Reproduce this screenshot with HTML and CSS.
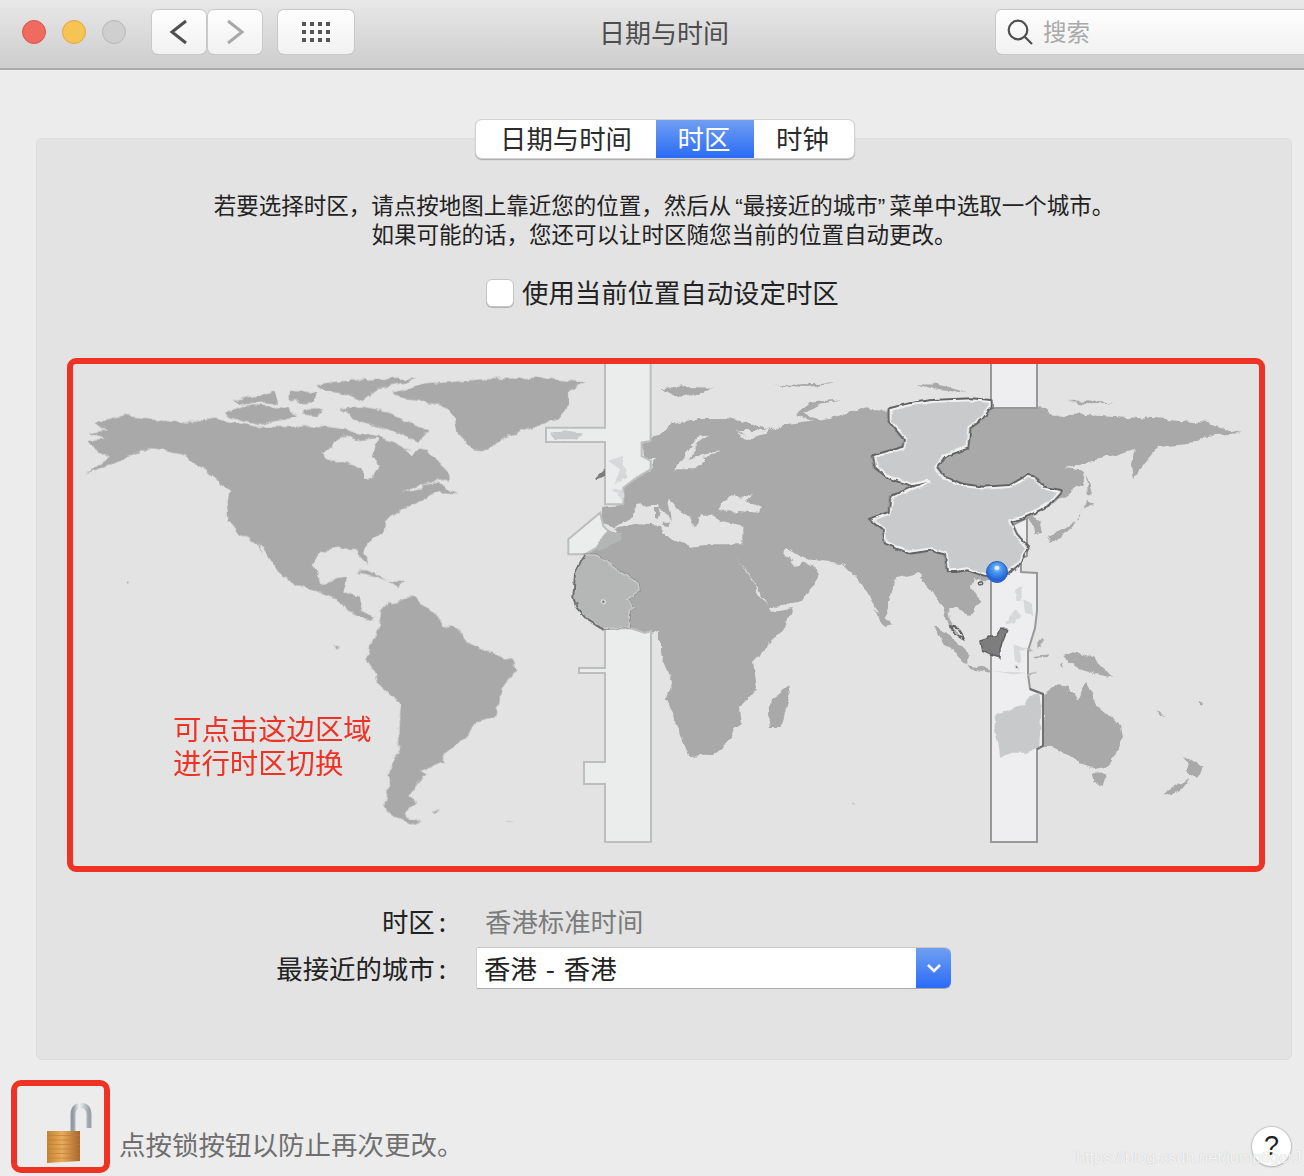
FILE: index.html
```html
<!DOCTYPE html>
<html lang="zh-CN">
<head>
<meta charset="utf-8">
<title>日期与时间</title>
<link rel="stylesheet" href="styles.css">
</head>
<body>
<header class="titlebar">
  <div class="lights">
    <span class="light light-red"></span>
    <span class="light light-yellow"></span>
    <span class="light light-grey"></span>
  </div>
  <div class="nav">
    <button class="tool tool-nav">
      <svg width="20" height="30" viewBox="0 0 20 30"><path class="chev" d="M17 4 3 15l14 11"/></svg>
    </button>
    <button class="tool tool-nav">
      <svg width="20" height="30" viewBox="0 0 20 30"><path class="chev chev-off" d="M3 4l14 11L3 26"/></svg>
    </button>
  </div>
  <button class="tool tool-grid">
    <svg width="30" height="22" viewBox="0 0 30 22"><path class="dots" d="M1 1h4v4H1zM9 1h4v4H9zM17 1h4v4h-4zM25 1h4v4h-4zM1 9h4v4H1zM9 9h4v4H9zM17 9h4v4h-4zM25 9h4v4h-4zM1 17h4v4H1zM9 17h4v4H9zM17 17h4v4h-4zM25 17h4v4h-4z"/></svg>
  </button>
  <h1 class="title">日期与时间</h1>
  <div class="search">
    <svg width="26" height="26" viewBox="0 0 26 26"><circle class="lens" cx="11" cy="11" r="9.3"/><path class="lens" d="M17.500 17.500 25 25"/></svg>
    <span class="search-text">搜索</span>
  </div>
</header>

<main class="page">
  <section class="panel">
    <div class="tabs">
      <span class="tab tab-a">日期与时间</span>
      <span class="tab tab-b">时区</span>
      <span class="tab tab-c">时钟</span>
    </div>
    <p class="desc">若要选择时区，请点按地图上靠近您的位置，然后从<span class="q q-open">“</span>最接近的城市<span class="q q-close">”</span>菜单中选取一个城市。<br>如果可能的话，您还可以让时区随您当前的位置自动更改。</p>
    <label class="auto"><span class="box"></span><span class="auto-text">使用当前位置自动设定时区</span></label>

    <div class="frame">
      <svg class="map" width="1186" height="502" viewBox="73 363 1186 502">
        <defs>
          <filter id="rough" filterUnits="userSpaceOnUse" x="73" y="363" width="1186" height="502" color-interpolation-filters="sRGB">
            <feTurbulence type="fractalNoise" baseFrequency=".09" numOctaves="3" seed="4" result="n"/>
            <feDisplacementMap in="SourceGraphic" in2="n" scale="7" xChannelSelector="R" yChannelSelector="G"/>
            <feGaussianBlur stdDeviation=".4"/>
          </filter>
          <filter id="rough-s" filterUnits="userSpaceOnUse" x="73" y="363" width="1186" height="502" color-interpolation-filters="sRGB">
            <feTurbulence type="fractalNoise" baseFrequency=".12" numOctaves="2" seed="9" result="n"/>
            <feDisplacementMap in="SourceGraphic" in2="n" scale="4" xChannelSelector="R" yChannelSelector="G"/>
            <feGaussianBlur stdDeviation=".35"/>
          </filter>
          <radialGradient id="pin" cx=".5" cy=".32" r=".72">
            <stop offset="0" stop-color="#a9d6ff"/>
            <stop offset=".3" stop-color="#4c9af0"/>
            <stop offset=".8" stop-color="#1f5fd8"/>
            <stop offset="1" stop-color="#3f7edc"/>
          </radialGradient>
          <path id="zone" class="ns" d="M590,175 L640,160 700,150 800,145 850,150 850,168 825,205 795,230 790,290 730,315 710,350 730,380 780,402 830,410 900,405 945,375 965,380 985,410 1030,420 1000,460 950,490 930,500 900,510 915,550 945,590 920,640 895,665 850,675 830,670 790,655 760,660 740,660 735,610 700,595 640,605 580,575 575,535 540,505 590,485 595,440 640,415 690,392 650,402 590,380 555,350 550,315 625,290 630,265 590,210 Z"/>
          <path id="wafrica" class="ns" d="M135,520 L105,580 100,650 110,680 140,715 190,745 270,740 270,690 285,680 262,655 300,630 295,605 240,570 170,520 Z"/>
          <clipPath id="zoneclip"><use href="#zone"/></clipPath>
          <clipPath id="wclip"><use href="#wafrica"/></clipPath>
        </defs>

        <g filter="url(#rough)">
          <!-- Eurasia and Africa, page coordinates -->
          <path class="land" d="M600,505 L623,503 623,487 637,477 650,468 657,458 650,458 643,455 642,443 653,437 673,423 700,417 727,417 747,422 760,427 767,430 740,430 750,438 770,428 787,423 823,418 847,413 858,408 889,410 932,400 991,400 1030,405 1045,408 1053,415 1088,413 1138,417 1208,422 1240,432 1205,435 1197,442 1158,446 1146,460 1133,478 1131,463 1135,448 1103,457 1064,467 1084,470 1082,483 1061,497 1049,505 1030,513 1041,520 1043,532 1035,533 1028,517 1021,530 1012,563 991,580 975,578 972,587 982,602 967,615 957,607 948,607 950,620 962,638 950,627 943,607 933,592 917,572 893,578 888,607 884,620 866,590 853,572 840,563 812,560 783,548 795,566 806,562 820,572 803,600 770,606 772,611 792,608 784,627 753,660 757,687 740,707 742,723 734,727 730,740 714,753 689,755 676,723 666,698 672,682 660,653 660,630 650,633 630,627 603,628 587,618 573,597 582,557 597,547 608,530 622,533 612,527 603,523 603,513 Z"/>
          <!-- Seas cut into the land -->
          <g transform="translate(540 380) scale(.33333)">
            <path class="sea" d="M215,445 L265,415 295,375 350,365 395,420 385,355 415,385 450,405 465,440 485,400 525,405 510,400 545,420 610,435 610,490 510,490 455,497 415,480 365,460 365,435 300,430 Z"/>
            <path class="land" d="M345,375 L360,375 355,415 345,410 Z M370,425 L395,425 385,435 370,432 Z"/>
            <path class="sea" d="M535,385 L565,345 610,350 640,338 615,360 665,380 660,395 590,390 560,395 Z"/>
            <path class="sea" d="M578,505 L600,540 685,670 665,650 630,590 Z"/>
            <path class="sea" d="M735,505 L750,510 768,555 760,558 Z"/>
            <path class="sea" d="M435,215 L475,165 505,160 470,185 470,210 445,235 500,215 550,210 490,225 495,240 460,265 400,265 430,235 Z"/>
            <path class="sea" d="M585,148 L630,170 690,145 680,158 620,175 Z"/>
            <path class="land" d="M365,25 L440,18 520,20 470,40 420,50 Z M430,190 L445,185 465,195 445,210 Z"/>
            <path class="land" d="M765,100 L810,65 900,55 830,75 790,100 850,125 790,112 Z"/>
          </g>
          <!-- Far east islands -->
          <g transform="translate(660 350) scale(.389 .33333)">
            <path class="land" d="M995,560 L1075,505 1090,470 1060,525 1005,580 Z M1095,450 L1120,460 1090,475 Z M1095,365 L1110,430 1100,430 Z"/>
            <path class="land" d="M1045,150 L1100,148 1165,158 1100,160 Z M660,97 L710,98 790,125 720,118 Z M290,103 L450,97 380,108 Z M5,115 L130,110 60,135 Z"/>
          </g>
          <g transform="translate(660 610) scale(.389 .33333)">
            <path class="land" d="M330,225 L335,250 310,345 285,345 280,315 285,265 Z"/>
            <path class="land" d="M550,0 L575,10 595,40 580,45 Z"/>
            <path class="land" d="M985,250 L1020,220 1050,225 1075,270 1095,215 1130,290 1185,345 1190,380 1160,460 1120,475 1080,460 1045,430 1000,405 985,405 Z"/>
            <path class="land" d="M1115,485 L1145,490 1135,525 1120,515 Z M1350,435 L1395,470 1380,500 1360,490 Z M1298,545 L1360,500 1340,530 1315,555 Z"/>
            <path class="land" d="M490,575 L500,580 490,583 Z M1278,295 L1300,315 1280,305 Z M1385,270 L1400,275 1390,280 Z"/>
          </g>
          <g transform="translate(900 540) scale(.33333)">
            <path class="land" d="M105,260 L140,275 205,340 205,370 170,340 130,310 Z"/>
            <path class="land" d="M205,372 L272,388 272,396 215,385 Z"/>
            <path class="land" d="M465,320 L490,345 530,330 580,350 640,410 590,400 540,385 510,365 Z"/>
            <path class="land" d="M415,300 L425,290 425,315 415,320 Z M402,345 L445,340 440,348 405,350 Z M480,370 L488,368 484,380 Z"/>
          </g>
          <!-- North America, Greenland -->
          <g transform="translate(60 350) scale(.3827 .33333)">
            <path class="land" d="M85,215 L165,195 260,205 335,215 410,203 425,208 520,228 600,228 680,225 745,235 770,245 830,255 900,290 960,300 1015,365 1015,385 980,390 945,402 890,425 945,415 950,402 985,395 1040,430 985,425 960,440 930,460 890,480 850,510 845,545 800,585 795,600 808,640 795,635 775,595 725,590 680,600 660,640 680,700 740,675 750,680 740,725 780,740 790,780 820,800 800,805 770,790 720,745 680,725 620,705 590,680 540,630 510,575 470,550 440,505 435,450 450,420 410,390 370,350 320,310 250,295 210,295 160,330 65,370 130,320 90,295 75,270 125,265 75,245 125,238 Z"/>
            <path class="sea" d="M745,250 L770,270 830,260 815,320 835,345 815,385 795,385 790,350 700,325 688,305 Z M900,295 L935,290 920,315 Z"/>
            <path class="sea" d="M515,575 L530,585 565,660 535,625 Z"/>
            <path class="sea" d="M340,315 L385,375 440,410 400,390 Z"/>
            <path class="land" d="M870,125 L950,100 1100,85 1250,80 1375,95 1330,120 1330,160 1300,205 1200,240 1150,265 1120,300 1080,295 1040,250 1030,200 1010,170 950,150 900,145 Z"/>
            <path class="land" d="M670,100 L720,92 800,85 930,82 890,100 830,115 790,150 750,130 690,120 Z M730,175 L790,170 860,185 965,240 935,272 860,235 780,210 Z M430,185 L480,165 590,170 620,195 520,222 440,195 Z M450,148 L560,125 570,155 480,160 Z M600,120 L670,125 660,155 600,150 Z M640,175 L690,175 670,195 635,190 Z"/>
            <path class="land" d="M775,665 L800,655 860,690 820,675 Z M860,695 L905,695 880,710 Z M170,688 L180,690 176,698 Z"/>
          </g>
          <!-- South America -->
          <g transform="translate(60 610) scale(.3827 .33333)">
            <path class="land" d="M840,0 L860,-25 920,-40 960,-15 1000,45 1040,55 1060,90 1120,125 1185,150 1190,180 1160,225 1135,320 1085,335 1070,370 1000,435 1005,450 945,480 960,490 940,510 915,555 930,570 900,600 905,620 945,630 915,640 860,610 850,580 865,470 885,420 890,280 845,235 800,150 805,120 830,60 Z"/>
            <path class="land" d="M970,602 L998,598 985,608 Z M1165,625 L1185,632 1170,630 Z M715,100 L730,110 718,112 Z"/>
          </g>
        </g>

        <!-- Pale time zone bands -->
        <g transform="translate(540 380) scale(.33333)">
          <path class="band ns" d="M195,-60 L332,-60 332,180 305,185 305,225 332,240 332,265 290,290 250,320 250,370 195,370 195,183 18,183 18,140 195,140 Z"/>
          <path class="band ns" d="M180,395 L85,475 85,520 135,520 170,500 205,450 190,435 Z"/>
        </g>
        <path class="band ns" d="M605,628 L630,627 645,632 651,630 651,841 605,841 605,783 584,783 584,761 605,761 605,672 579,672 579,667 605,667 Z"/>
        <path class="band band-on ns" d="M991,355 L1037,355 1037,407 991,407 Z"/>
        <path class="band band-on ns" d="M991,841 L991,578 1000,530 1027,517 1027,555 1021,557 1021,571 1037,572 1037,610 1035,627 1028,650 1028,673 1030,688 1043,693 1043,745 1037,748 1037,841 Z"/>
        <path class="edge-strong ns" d="M1030,688 L1043,693 1043,745 1037,748"/>

        <g filter="url(#rough-s)">
          <g transform="translate(540 380) scale(.33333)">
            <path class="tint-soft" d="M205,240 L245,225 262,290 225,310 240,265 Z M210,322 L250,328 250,365 235,340 Z"/>
            <path class="tint" d="M30,155 L75,148 130,158 105,175 45,175 Z"/>
            <path class="tint-mid" d="M170,490 L205,450 245,460 240,480 175,510 Z"/>
            <path class="dark" d="M165,290 L195,262 195,285 170,295 Z"/>
            <use href="#wafrica" class="wfill"/>
            <g clip-path="url(#wclip)"><use href="#wafrica" class="wfill wglow"/></g>
            <path class="west-line ns" d="M135,520 L105,580 100,650 110,680 140,715 190,745"/>
            <circle class="spot" cx="190" cy="662" r="6"/>
            <circle class="dark" cx="108" cy="668" r="6"/>
          </g>
          <!-- Land inside the selected band -->
          <g transform="translate(660 610) scale(.389 .33333)">
            <path class="tint" d="M950,260 L975,245 980,300 975,405 945,425 905,425 875,440 870,400 860,350 862,315 900,295 935,280 Z"/>
          </g>
          <g transform="translate(900 540) scale(.33333)">
            <path class="tint-soft" d="M345,150 L365,135 365,180 350,180 Z M370,175 L395,190 400,225 375,215 Z M340,310 L385,325 360,330 365,365 345,360 Z M315,250 L345,205 365,225 345,245 Z M275,390 L380,395 340,400 Z"/>
            <circle class="spot" cx="350" cy="378" r="5"/>
            <path class="dark dark-edge ns" d="M240,300 L258,295 270,285 290,285 300,265 320,265 315,285 300,320 300,350 280,345 245,330 Z"/>
            <path class="ring ns" d="M150,255 L175,260 190,295 165,280 Z"/>
            <path class="tint-mid" d="M380,325 L402,328 385,332 Z M380,400 L412,390 385,406 Z"/>
            <circle class="ring ns" cx="243" cy="127" r="5"/>
          </g>

          <!-- Selected zone -->
          <g transform="translate(660 350) scale(.389 .33333)">
            <use href="#zone" class="zfill"/>
            <g clip-path="url(#zoneclip)"><use href="#zone" class="zfill zglow"/></g>
          </g>
        </g>
        <circle class="pin" cx="997" cy="571" r="10.500"/>
        <ellipse class="pin-dot" cx="997" cy="567" rx="2.500" ry="2"/>
      </svg>
      <div class="note">可点击这边区域<br>进行时区切换</div>
    </div>

    <div class="row row-zone">
      <span class="label">时区<span class="colon">:</span></span>
      <span class="value">香港标准时间</span>
    </div>
    <div class="row row-city">
      <span class="label">最接近的城市<span class="colon">:</span></span>
      <div class="select">
        <span class="select-text">香港 - 香港</span>
        <span class="select-arrow">
          <svg width="16" height="10" viewBox="0 0 16 10"><path class="caret" d="M2 2l6 6 6-6"/></svg>
        </span>
      </div>
    </div>
  </section>

  <footer class="foot">
    <div class="lockframe">
      <svg width="56" height="66" viewBox="0 0 56 66">
        <defs>
          <linearGradient id="steel" x1="0" x2="1">
            <stop offset="0" stop-color="#8f9aa3"/>
            <stop offset=".4" stop-color="#eef1f3"/>
            <stop offset="1" stop-color="#9aa3aa"/>
          </linearGradient>
          <linearGradient id="brass" x1="0" x2="1">
            <stop offset="0" stop-color="#c4842f"/>
            <stop offset=".45" stop-color="#e8ab5c"/>
            <stop offset="1" stop-color="#a8642a"/>
          </linearGradient>
        </defs>
        <path class="shackle" d="M28 33V17C28 10 31 7.500 36 7.500s8 2.500 8 9.500v13"/>
        <path class="lock-body" d="M2 33h33v30L2 65z"/>
        <path class="lock-rib" d="M2 37.500h33M2 42h33M2 46.500h33M2 51h33M2 55.500h33M2 60h33"/>
      </svg>
    </div>
    <p class="hint">点按锁按钮以防止再次更改。</p>
    <button class="help">?</button>
  </footer>
</main>
<div class="mark">https://blog.csdn.net/jumptigerJ</div>
</body>
</html>
```

FILE: styles.css
```css
* { box-sizing: border-box; }
html, body { margin: 0; padding: 0; }
body {
  position: relative;
  width: 1304px;
  height: 1176px;
  overflow: hidden;
  background: #ececec;
  color: #222;
  font-family: "Noto Sans CJK SC", "Liberation Sans", sans-serif;
}
button { font-family: inherit; padding: 0; }

/* Title bar */
.titlebar {
  display: flex;
  align-items: center;
  height: 70px;
  padding: 0 0 4px 22px;
  background: linear-gradient(#e8e8e8, #cdcdcd);
  border-bottom: 2px solid #ababab;
}
.lights { display: flex; gap: 16px; margin-right: 26px; }
.light { width: 24px; height: 24px; border-radius: 50%; border: 1px solid; }
.light-red { background: #ef6b60; border-color: #d9564c; }
.light-yellow { background: #f7c352; border-color: #dfa83f; }
.light-grey { background: #cfcfcf; border-color: #b7b7b7; }
.nav { display: flex; gap: 2px; margin-right: 16px; }
.tool {
  display: flex;
  align-items: center;
  justify-content: center;
  height: 44px;
  border: 0;
  border-radius: 6px;
  background: linear-gradient(#fefefe, #f1f1f1);
  box-shadow: 0 0 0 1px #c9c9c9, 0 1px 0 #a9a9a9;
}
.tool-nav { width: 54px; }
.tool-grid { width: 76px; }
.chev { fill: none; stroke: #4f4f4f; stroke-width: 3; }
.chev-off { stroke: #a9a9a9; }
.dots { fill: #555; }
.title {
  flex: 1;
  margin: 0;
  padding-right: 22px;
  text-align: center;
  font-size: 26px;
  line-height: 36px;
  font-weight: 400;
  color: #4d4d4d;
}
.search {
  display: flex;
  align-items: center;
  gap: 10px;
  width: 340px;
  height: 44px;
  flex: none;
  margin-right: -32px;
  padding-left: 11px;
  border-radius: 6px;
  background: linear-gradient(#fefefe, #f1f1f1);
  box-shadow: 0 0 0 1px #c9c9c9, 0 1px 0 #a9a9a9;
  font-size: 23.500px;
  color: #a9a9a9;
}
.search-text { margin-top: -3px; }
.lens { fill: none; stroke: #4f4f4f; stroke-width: 2.200; }

/* Panel */
.page { padding: 68px 12px 0 36px; }
.panel {
  height: 922px;
  border: 1px solid #dcdcdc;
  border-radius: 6px;
  background: #e3e3e3;
}
.tabs {
  display: flex;
  width: 378px;
  height: 38px;
  margin: -19px 0 0 439px;
  border-radius: 6px;
  background: #fff;
  box-shadow: 0 0 0 1px #d2d2d2, 0 1px 1px 1px #a9a9a9;
  font-size: 26.400px;
  line-height: 35px;
  text-align: center;
  color: #2b2b2b;
}
.tab-a { width: 180px; }
.tab-b { width: 98px; padding-right: 2px; color: #fff; background: linear-gradient(#709ff1, #2a6bf7); }
.tab-c { width: 100px; padding-right: 3px; }
.desc {
  margin: 32px 0 0;
  padding-bottom: 2px;
  text-align: center;
  font-size: 22.500px;
  line-height: 28px;
  color: #222;
}
.q { font-family: "Liberation Sans", sans-serif; line-height: 1; }
.q-open { padding-left: 4px; }
.q-close { padding-right: 4px; }
.auto {
  display: flex;
  align-items: center;
  gap: 8px;
  height: 28px;
  margin: 30px 0 0 449px;
  font-size: 26.400px;
}
.auto-text { margin-top: -2px; }
.box {
  width: 28px;
  height: 28px;
  border-radius: 6px;
  background: #fff;
  border: 1px solid #c4c4c4;
  box-shadow: 0 1px 0 #b4b4b4;
}

/* Map */
.frame {
  position: relative;
  width: 1198px;
  height: 514px;
  margin: 51px 0 0 30px;
  border: 6px solid #ee3224;
  border-radius: 9px;
}
.map { display: block; }
.note {
  position: absolute;
  left: 100px;
  top: 347px;
  font-size: 28.400px;
  line-height: 34px;
  color: #ee3224;
}
.ns { vector-effect: non-scaling-stroke; }
.land { fill: #a9a9a9; }
.sea { fill: #e3e3e3; }
.band { fill: #ebecec; stroke: #bdbdbd; stroke-width: 2; stroke-linejoin: miter; }
.band-on { fill: #eeeef0; stroke: #989898; }
.edge-strong { fill: none; stroke: #6f6f6f; stroke-width: 2; }
.tint { fill: #c8c9ca; }
.tint-soft { fill: #d7d8d9; }
.tint-mid { fill: #b4b5b5; }
.dark { fill: #7d7d7d; }
.dark-edge { stroke: #5f5f5f; stroke-width: 1.500; }
.ring { fill: none; stroke: #5f5f5f; stroke-width: 1.500; }
.spot { fill: #7d7d7d; stroke: #d9d9d9; stroke-width: 1.500; vector-effect: non-scaling-stroke; }
.wfill { fill: #b5b6b6; stroke: #8f8f8f; stroke-width: 1.500; }
.wglow { stroke: #c8c8c8; stroke-width: 3; }
.west-line { fill: none; stroke: #707070; stroke-width: 2; }
.zfill { fill: #c9cacb; stroke: #626262; stroke-width: 4; stroke-linejoin: round; }
.zglow { stroke: #f1f1f1; stroke-width: 4; }
.pin { fill: url(#pin); stroke: #2b5fb8; stroke-width: 1; }
.pin-dot { fill: #e4f2ff; }

/* Form */
.row { display: flex; align-items: center; height: 40px; font-size: 26.400px; }
.row-zone { margin-top: 29px; }
.row-city { margin-top: 7px; }
.label { width: 412px; padding-right: 3px; text-align: right; color: #222; }
.colon { margin-left: 4px; }
.value { margin-left: 36px; color: #7b7b7b; }
.select {
  display: flex;
  width: 474px;
  height: 40px;
  margin-left: 28px;
  border-radius: 0 6px 6px 0;
  background: #fff;
  box-shadow: 0 1px 0 #a9a9a9, 0 -1px 0 #c9c9c9, -1px 0 0 #d2d2d2;
}
.select-text { flex: 1; padding-left: 7px; line-height: 40px; word-spacing: 3px; color: #222; }
.select-arrow {
  display: flex;
  align-items: center;
  justify-content: center;
  width: 35px;
  border-radius: 0 6px 6px 0;
  background: linear-gradient(#709ff1, #2a6bf7);
}
.caret { fill: none; stroke: #fff; stroke-width: 2.500; }

/* Footer */
.foot {
  display: flex;
  align-items: flex-end;
  margin: 20px 1px 0 -25px;
}
.lockframe {
  display: flex;
  align-items: flex-end;
  justify-content: flex-end;
  width: 99px;
  height: 93px;
  padding: 0 3px 3px 0;
  border: 6px solid #ee3224;
  border-radius: 10px;
}
.shackle { fill: none; stroke: url(#steel); stroke-width: 5; }
.lock-body { fill: url(#brass); }
.lock-rib { fill: none; stroke: #b87d38; stroke-width: 1; opacity: .6; }
.hint {
  flex: 1;
  margin: 0 0 11px 9px;
  font-size: 26.500px;
  line-height: 36px;
  color: #6f6f6f;
}
.help {
  width: 39px;
  height: 39px;
  margin-bottom: 7px;
  border: 0;
  border-radius: 50%;
  background: #fff;
  box-shadow: 0 0 1px 1px #c4c4c4, 0 1px 2px #a9a9a9;
  font-family: "Liberation Sans", sans-serif;
  font-size: 27px;
  line-height: 39px;
  color: #222;
}
.mark {
  position: absolute;
  left: 1076px;
  top: 1146px;
  font-family: "Liberation Sans", sans-serif;
  font-size: 16.300px;
  line-height: 22px;
  color: rgba(255, 255, 255, .85);
  text-shadow: 0 0 1px rgba(170, 170, 170, .8);
}
```
